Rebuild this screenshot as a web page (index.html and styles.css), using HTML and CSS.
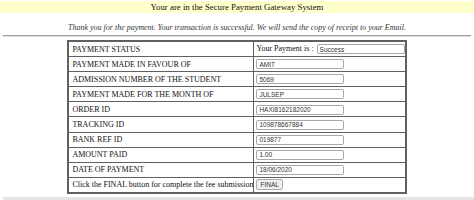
FILE: index.html
```html
<!DOCTYPE html>
<html>
<head>
<meta charset="utf-8">
<link rel="stylesheet" href="styles.css">
</head>
<body>
<div class="header">Your are in the Secure Payment Gateway System</div>
<p class="thanks">Thank you for the payment. Your transaction is successful. We will send the copy of receipt to your Email.</p>
<div class="rule"></div>
<table class="pay">
  <tr><td class="lab">PAYMENT STATUS</td><td class="val"><span class="status">Your Payment is :</span><input class="fld" type="text" value="Success"></td></tr>
  <tr><td class="lab">PAYMENT MADE IN FAVOUR OF</td><td class="val"><input class="fld" type="text" value="AMIT"></td></tr>
  <tr><td class="lab">ADMISSION NUMBER OF THE STUDENT</td><td class="val"><input class="fld" type="text" value="5069"></td></tr>
  <tr><td class="lab">PAYMENT MADE FOR THE MONTH OF</td><td class="val"><input class="fld" type="text" value="JULSEP"></td></tr>
  <tr><td class="lab">ORDER ID</td><td class="val"><input class="fld" type="text" value="HAXI8162182020"></td></tr>
  <tr><td class="lab">TRACKING ID</td><td class="val"><input class="fld" type="text" value="109878667884"></td></tr>
  <tr><td class="lab">BANK REF ID</td><td class="val"><input class="fld" type="text" value="019877"></td></tr>
  <tr><td class="lab">AMOUNT PAID</td><td class="val"><input class="fld" type="text" value="1.00"></td></tr>
  <tr><td class="lab">DATE OF PAYMENT</td><td class="val"><input class="fld" type="text" value="18/06/2020"></td></tr>
  <tr><td class="lab">Click the FINAL button for complete the fee submission</td><td class="val"><button class="btn" type="button">FINAL</button></td></tr>
</table>
<div class="footer"></div>
</body>
</html>
```
FILE: styles.css
```css
html, body {
  margin: 0;
  padding: 0;
  background: #ffffff;
  font-family: "Liberation Serif", "Times New Roman", serif;
  color: #222;
  overflow: hidden;
}
.header {
  margin-top: 1px;
  height: 12px;
  line-height: 12px;
  background: #ffffcc;
  text-align: center;
  font-size: 8.8px;
  color: #111;
}
.thanks {
  margin: 9px 0 0 0;
  height: 12px;
  line-height: 12px;
  text-align: center;
  font-style: italic;
  font-size: 8px;
  color: #333;
}
.rule {
  margin: 1px 3px 0 3px;
  height: 0;
  border-top: 1px solid #a0a0a0;
  border-bottom: 1px solid #e0e0e0;
}
.pay {
  margin: 3px auto 0 auto;
  width: 336px;
  border-collapse: collapse;
  border: 2px solid #606060;
  font-size: 8px;
  color: #111;
}
.pay td {
  border: 1px solid #606060;
  height: 14.1px;
  padding: 0;
  vertical-align: middle;
  white-space: nowrap;
}
.lab {
  width: 181px;
  padding-left: 3px !important;
}
.val {
  padding-left: 2px !important;
}
.status {
  margin-right: 3px;
}
.fld {
  box-sizing: border-box;
  width: 88px;
  height: 10px;
  margin: 0;
  padding: 0 2px;
  border: 1px solid #a8a8a8;
  border-radius: 2px;
  font-family: "Liberation Sans", Arial, sans-serif;
  font-size: 6.5px;
  color: #333;
  vertical-align: middle;
  background: #fff;
}
.btn {
  box-sizing: border-box;
  height: 11px;
  margin: 0;
  padding: 0 3px;
  border: 1px solid #aaa;
  border-radius: 2px;
  background: #efefef;
  font-family: "Liberation Sans", Arial, sans-serif;
  font-size: 6.5px;
  color: #333;
  vertical-align: middle;
}
.footer {
  margin: 3px 0 0 3px;
  height: 10px;
  background: #e4e4e4;
}
```
